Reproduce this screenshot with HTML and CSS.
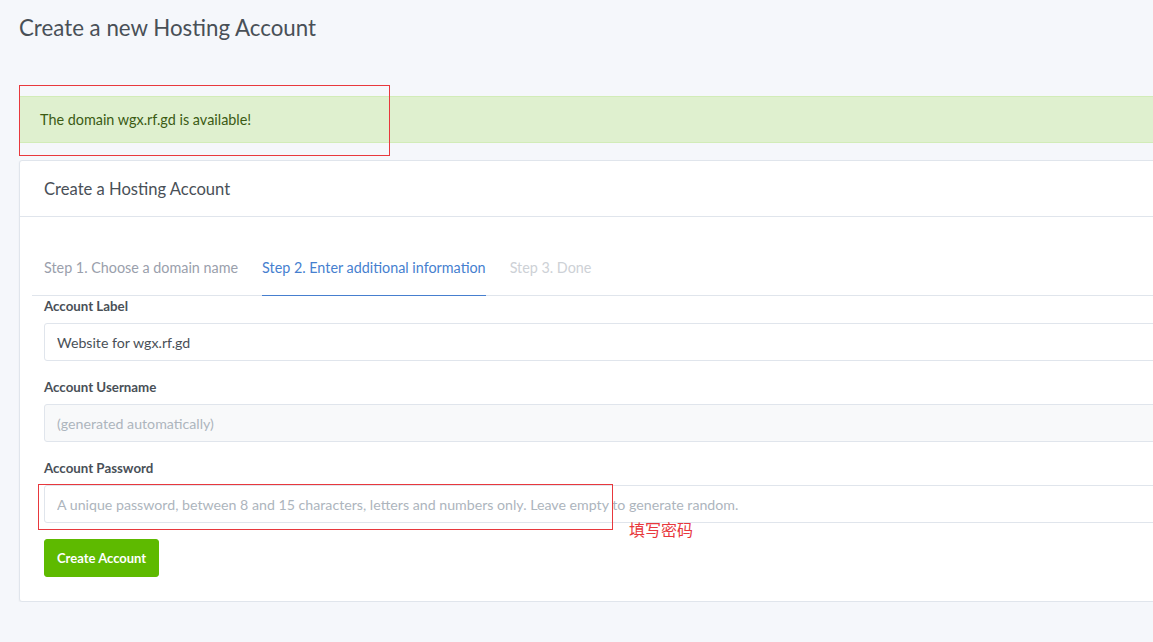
FILE: index.html
```html
<!DOCTYPE html>
<html lang="en">
<head>
<meta charset="utf-8">
<title>Create a new Hosting Account</title>
<link rel="stylesheet" href="styles.css">
</head>
<body>
<div class="page">
  <h1 class="page-title">Create a new Hosting Account</h1>
  <div class="alert-wrap">
    <div class="alert">The domain wgx.rf.gd is available!</div>
    <div class="mark mark-alert"></div>
  </div>
  <div class="card">
    <div class="card-header">
      <h3 class="card-title">Create a Hosting Account</h3>
    </div>
    <div class="card-body">
      <ul class="nav-tabs">
        <li class="nav-item"><span class="nav-link">Step 1. Choose a domain name</span></li>
        <li class="nav-item"><span class="nav-link active">Step 2. Enter additional information</span></li>
        <li class="nav-item"><span class="nav-link disabled">Step 3. Done</span></li>
      </ul>
      <form class="form">
        <div class="form-group">
          <label class="form-label">Account Label</label>
          <input class="form-control" type="text" value="Website for wgx.rf.gd">
        </div>
        <div class="form-group">
          <label class="form-label">Account Username</label>
          <input class="form-control" type="text" placeholder="(generated automatically)" disabled>
        </div>
        <div class="form-group pw-group">
          <label class="form-label">Account Password</label>
          <input class="form-control" type="text" placeholder="A unique password, between 8 and 15 characters, letters and numbers only. Leave empty to generate random.">
          <div class="mark mark-pw"></div>
          <span class="note">填写密码</span>
        </div>
        <button class="btn" type="button">Create Account</button>
      </form>
    </div>
  </div>
</div>
</body>
</html>
```

FILE: styles.css
```css
html, body {
  margin: 0;
  padding: 0;
  background: #f5f7fb;
  overflow: hidden;
}
body {
  font-family: "Lato", "Noto Sans", sans-serif;
  font-size: 14.35px;
  line-height: 1.5;
  color: #495057;
}
.page {
  width: 1200px;
  padding: 0 0 0 19px;
}
.page-title {
  margin: 0;
  padding: 13px 0 0;
  height: 96px;
  box-sizing: border-box;
  font-size: 22.3px;
  font-weight: 400;
  line-height: 30px;
  color: #495057;
}
.alert-wrap {
  position: relative;
  margin-bottom: 17px;
}
.alert {
  background: #dff0cf;
  border: 1px solid #d2ecb8;
  color: #3b5b14;
  padding: 12px 20px;
  height: 47px;
  box-sizing: border-box;
  font-size: 14.4px;
  line-height: 22px;
}
.mark {
  position: absolute;
  border: 1px solid #e8383d;
  pointer-events: none;
}
.mark-alert {
  left: 0;
  top: -11px;
  width: 369px;
  height: 69px;
}
.card {
  background: #fff;
  border: 1px solid #e0e5ec;
  border-radius: 3px;
  box-shadow: 0 1px 2px rgba(0,0,0,0.05);
  height: 442px;
  box-sizing: border-box;
}
.card-header {
  height: 56px;
  box-sizing: border-box;
  padding: 2px 24px 0;
  display: flex;
  align-items: center;
  border-bottom: 1px solid #e0e5ec;
}
.card-title {
  margin: 0;
  font-size: 16.6px;
  font-weight: 400;
  color: #495057;
}
.card-body {
  padding: 25px 24px 24px;
}
.nav-tabs {
  list-style: none;
  margin: 0 -12px;
  padding: 0;
  display: flex;
  border-bottom: 1px solid #e0e5ec;
}
.nav-item {
  margin: 0 12px;
}
.nav-link {
  display: block;
  padding: 15px 0 16px;
  line-height: 22px;
  color: #9aa0ac;
  border-bottom: 1px solid transparent;
  margin-bottom: -1px;
}
.nav-link.active {
  color: #467fcf;
  border-bottom-color: #467fcf;
}
.nav-link.disabled {
  color: #cdd1d6;
}
.form-group {
  margin-bottom: 16px;
  position: relative;
}
.form-label {
  display: block;
  font-size: 13.3px;
  font-weight: 700;
  line-height: 20px;
  margin-bottom: 7px;
  color: #495057;
}
.form-control {
  display: block;
  width: 100%;
  height: 38px;
  box-sizing: border-box;
  padding: 6px 12px;
  font-family: inherit;
  font-size: 14.2px;
  color: #495057;
  background: #fff;
  border: 1px solid #e0e5ec;
  border-radius: 3px;
  outline: none;
}
.form-control::placeholder {
  color: #adb5bd;
}
.form-control:disabled {
  background: #f8f9fa;
}
.mark-pw {
  left: -6px;
  top: 26px;
  width: 573px;
  height: 44px;
}
.note {
  position: absolute;
  left: 585px;
  top: 60px;
  font-family: "Noto Sans CJK SC", sans-serif;
  font-size: 16px;
  line-height: 22px;
  color: #e8383d;
}
.btn {
  display: block;
  height: 38px;
  padding: 0 12px;
  background: #5eba00;
  border: 1px solid #5eba00;
  border-radius: 3px;
  color: #fff;
  font-family: inherit;
  font-size: 13px;
  font-weight: 700;
}
```
